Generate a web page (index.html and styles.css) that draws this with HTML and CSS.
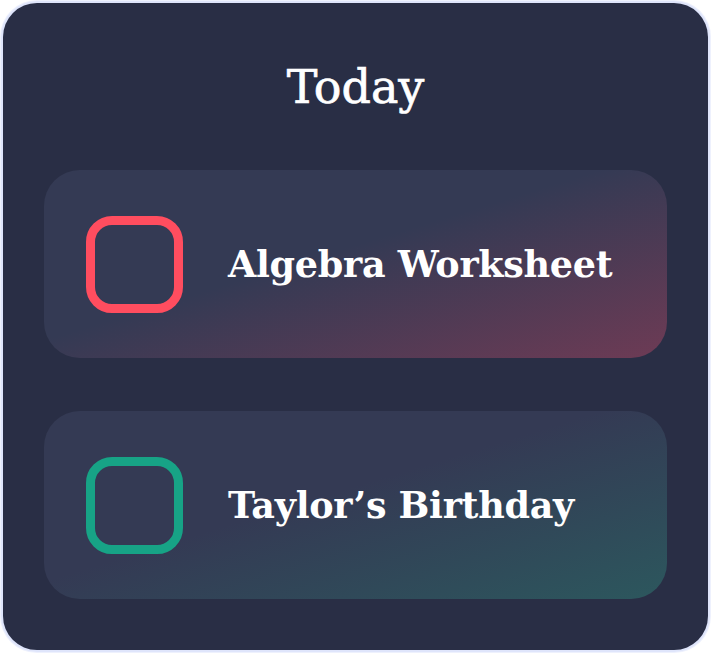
FILE: index.html
```html
<!DOCTYPE html>
<html>
<head>
<meta charset="utf-8">
<link rel="stylesheet" href="styles.css">
</head>
<body>
<div class="panel">
  <h1 class="title">Today</h1>
  <div class="list">
    <div class="item item-red">
      <span class="check check-red"></span>
      <span class="label">Algebra Worksheet</span>
    </div>
    <div class="item item-green">
      <span class="check check-green"></span>
      <span class="label">Taylor’s Birthday</span>
    </div>
  </div>
</div>
</body>
</html>
```
FILE: styles.css
```css
html, body {
  margin: 0;
  padding: 0;
  background: #ffffff;
}
body {
  width: 711px;
  height: 653px;
  padding: 3px;
  box-sizing: border-box;
}
.panel {
  box-sizing: border-box;
  width: 705px;
  height: 647px;
  background: #292e45;
  border-radius: 34px;
  box-shadow: 0 0 0 2px #dfe5fb, 0 0 0 3px #eef1fd;
  padding: 0 41px;
  display: flex;
  flex-direction: column;
  font-family: "DejaVu Serif", serif;
  color: #ffffff;
}
.title {
  margin: 0;
  height: 167px;
  box-sizing: border-box;
  padding-top: 54px;
  text-align: center;
  font-size: 46px;
  font-weight: normal;
  line-height: 60px;
  -webkit-text-stroke: 0.7px #ffffff;
}
.list {
  display: flex;
  flex-direction: column;
  gap: 53px;
}
.item {
  height: 188px;
  border-radius: 36px;
  display: flex;
  align-items: center;
  padding-left: 42px;
  gap: 45px;
}
.item-red {
  background: linear-gradient(163deg, #343a54 45%, #7d3b55 115%);
}
.item-green {
  background: linear-gradient(163deg, #343a54 45%, #2a5f60 115%);
}
.check {
  width: 97px;
  height: 97px;
  box-sizing: border-box;
  border: 9px solid;
  border-radius: 26px;
  flex: none;
}
.check-red { border-color: #ff4d5f; }
.check-green { border-color: #17a386; }
.label {
  font-size: 36.5px;
  font-weight: bold;
  letter-spacing: -0.3px;
}
```
